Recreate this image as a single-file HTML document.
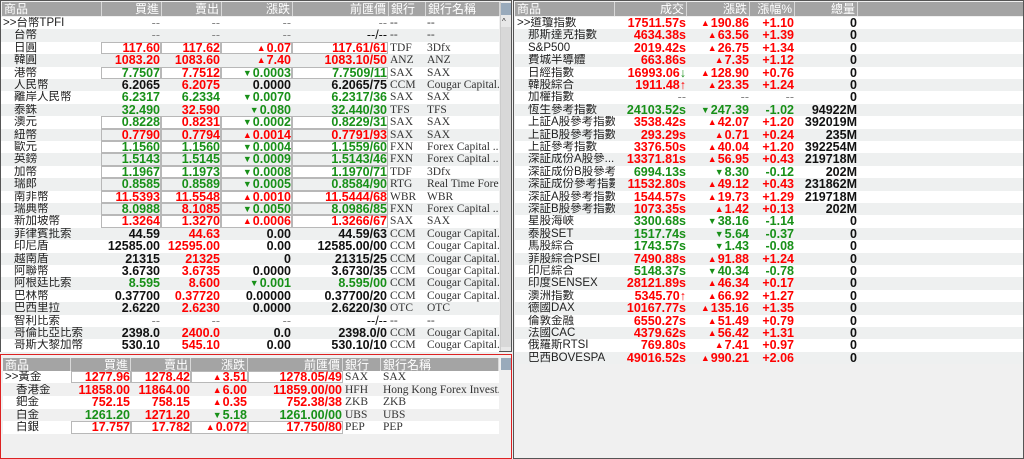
<!DOCTYPE html>
<html><head><meta charset="utf-8"><style>
*{margin:0;padding:0;box-sizing:border-box}
body{width:1024px;height:459px;overflow:hidden;background:#f0f0f0;position:relative;font-family:"Liberation Sans","Noto Sans CJK TC",sans-serif}
.pan{position:absolute;border:1px solid #555;background:#f0f0f0;overflow:hidden}
.hd{position:absolute;left:1px;top:1px;height:14px;display:flex;background:#a4a4a4;color:#fff;font-size:12px;line-height:14px}
.hd span{border-right:1px solid #d8d8d8;padding:0 2px;text-align:right;white-space:nowrap;overflow:hidden}
.hd span.l{text-align:left}
.row{position:absolute;left:1px;height:12.4px;display:flex;line-height:12.4px;font-size:12.5px;font-weight:bold;white-space:nowrap}
.row:nth-child(odd){background:#fff}
.row.gr{background:#eef0f0}
.row span{text-align:right;overflow:hidden;padding-right:1px;height:12.4px;line-height:12.4px}
.row span.n{text-align:left;font-weight:normal;color:#222;font-size:11.5px;padding-left:2px}
.row span.t{text-align:left;font-weight:normal;color:#333;font-family:"Liberation Serif",serif;font-size:11.5px;padding-left:2px}
.b{box-shadow:inset 0 0 0 1px #b8b8b8}
.r{color:#f00}.g{color:#189018}.k{color:#111}.m{color:#888;font-weight:normal}
.tr{font-size:9px;vertical-align:1px;margin-right:1px}
.sb{position:absolute;background:#e8e8e8;border-left:1px solid #ccc}
i.in{display:inline-block;width:11px}
</style></head><body>

<div class="pan" style="left:0;top:0;width:512px;height:352px">
<div class="hd" style="width:498px"><span class="l" style="width:100px">商品</span><span style="width:60px">買進</span><span style="width:60px">賣出</span><span style="width:71px">漲跌</span><span style="width:96px">前匯價</span><span class="l" style="width:37px">銀行</span><span class="l" style="width:74px">銀行名稱</span></div>
<div class="sb" style="left:499px;top:1px;width:11px;height:350px"></div>
<div style="position:absolute;left:500px;top:2px;width:10px;height:12px;background:#9ab;"></div>
<div style="position:absolute;left:501px;top:18px;width:8px;height:6px;font-size:8px;line-height:6px;color:#333">^</div>
<div style="position:absolute;left:500px;top:26px;width:10px;height:320px;background:#d8d8d8"></div>
</div>

<div class="pan" style="left:0;top:354px;width:512px;height:105px;border:1px solid #d22">
<div class="hd" style="left:2px;top:3px;width:496px"><span class="l" style="width:68px">商品</span><span style="width:60px">買進</span><span style="width:60px">賣出</span><span style="width:57px">漲跌</span><span style="width:95px">前匯價</span><span class="l" style="width:38px">銀行</span><span class="l" style="width:118px">銀行名稱</span></div>
<div style="position:absolute;left:500px;top:3px;width:10px;height:12px;background:#9ab"></div>
</div>

<div class="pan" style="left:513px;top:0;width:511px;height:459px">
<div class="hd" style="width:509px"><span class="l" style="width:100px">商品</span><span style="width:72px">成交</span><span style="width:63px">漲跌</span><span style="width:45px">漲幅%</span><span style="width:63px">總量</span><span style="width:166px;border-right:none"></span></div>
</div>

<div id="rows">
<div style="position:absolute;left:0;top:0">
<div class="row" style="top:17px;width:498px"><span class="n" style="width:100px">&gt;&gt;台幣TPFI</span><span class="m" style="width:60px">--</span><span class="m" style="width:60px">--</span><span class="m" style="width:71px">--</span><span class="m" style="width:96px">--</span><span class="t" style="width:37px">--</span><span class="t" style="width:74px">--</span></div>
<div class="row gr" style="top:29.4px;width:498px"><span class="n" style="width:100px"><i class="in"></i>台幣</span><span class="m" style="width:60px">--</span><span class="m" style="width:60px">--</span><span class="m" style="width:71px">--</span><span class="k" style="width:96px;font-weight:normal">--/--</span><span class="t" style="width:37px">--</span><span class="t" style="width:74px">--</span></div>
<div class="row" style="top:41.8px;width:498px"><span class="n" style="width:100px"><i class="in"></i>日圓</span><span class="r b" style="width:60px">117.60</span><span class="r b" style="width:60px">117.62</span><span class="r b" style="width:71px"><i class="tr">▲</i>0.07</span><span class="r b" style="width:96px">117.61/61</span><span class="t" style="width:37px">TDF</span><span class="t" style="width:74px">3Dfx</span></div>
<div class="row gr" style="top:54.2px;width:498px"><span class="n" style="width:100px"><i class="in"></i>韓圓</span><span class="r" style="width:60px">1083.20</span><span class="r" style="width:60px">1083.60</span><span class="r" style="width:71px"><i class="tr">▲</i>7.40</span><span class="r" style="width:96px">1083.10/50</span><span class="t" style="width:37px">ANZ</span><span class="t" style="width:74px">ANZ</span></div>
<div class="row" style="top:66.6px;width:498px"><span class="n" style="width:100px"><i class="in"></i>港幣</span><span class="g b" style="width:60px">7.7507</span><span class="r b" style="width:60px">7.7512</span><span class="g b" style="width:71px"><i class="tr">▼</i>0.0003</span><span class="g b" style="width:96px">7.7509/11</span><span class="t" style="width:37px">SAX</span><span class="t" style="width:74px">SAX</span></div>
<div class="row gr" style="top:79px;width:498px"><span class="n" style="width:100px"><i class="in"></i>人民幣</span><span class="k" style="width:60px">6.2065</span><span class="r" style="width:60px">6.2075</span><span class="k" style="width:71px">0.0000</span><span class="k" style="width:96px">6.2065/75</span><span class="t" style="width:37px">CCM</span><span class="t" style="width:74px">Cougar Capital...</span></div>
<div class="row" style="top:91.4px;width:498px"><span class="n" style="width:100px"><i class="in"></i>離岸人民幣</span><span class="g" style="width:60px">6.2317</span><span class="g" style="width:60px">6.2334</span><span class="g" style="width:71px"><i class="tr">▼</i>0.0070</span><span class="g" style="width:96px">6.2317/36</span><span class="t" style="width:37px">SAX</span><span class="t" style="width:74px">SAX</span></div>
<div class="row gr" style="top:103.8px;width:498px"><span class="n" style="width:100px"><i class="in"></i>泰銖</span><span class="g" style="width:60px">32.490</span><span class="r" style="width:60px">32.590</span><span class="g" style="width:71px"><i class="tr">▼</i>0.080</span><span class="g" style="width:96px">32.440/30</span><span class="t" style="width:37px">TFS</span><span class="t" style="width:74px">TFS</span></div>
<div class="row" style="top:116.2px;width:498px"><span class="n" style="width:100px"><i class="in"></i>澳元</span><span class="g b" style="width:60px">0.8228</span><span class="r b" style="width:60px">0.8231</span><span class="g b" style="width:71px"><i class="tr">▼</i>0.0002</span><span class="g b" style="width:96px">0.8229/31</span><span class="t" style="width:37px">SAX</span><span class="t" style="width:74px">SAX</span></div>
<div class="row gr" style="top:128.6px;width:498px"><span class="n" style="width:100px"><i class="in"></i>紐幣</span><span class="r b" style="width:60px">0.7790</span><span class="r b" style="width:60px">0.7794</span><span class="r b" style="width:71px"><i class="tr">▲</i>0.0014</span><span class="r b" style="width:96px">0.7791/93</span><span class="t" style="width:37px">SAX</span><span class="t" style="width:74px">SAX</span></div>
<div class="row" style="top:141px;width:498px"><span class="n" style="width:100px"><i class="in"></i>歐元</span><span class="g b" style="width:60px">1.1560</span><span class="g b" style="width:60px">1.1560</span><span class="g b" style="width:71px"><i class="tr">▼</i>0.0004</span><span class="g b" style="width:96px">1.1559/60</span><span class="t" style="width:37px">FXN</span><span class="t" style="width:74px">Forex Capital ...</span></div>
<div class="row gr" style="top:153.4px;width:498px"><span class="n" style="width:100px"><i class="in"></i>英鎊</span><span class="g b" style="width:60px">1.5143</span><span class="g b" style="width:60px">1.5145</span><span class="g b" style="width:71px"><i class="tr">▼</i>0.0009</span><span class="g b" style="width:96px">1.5143/46</span><span class="t" style="width:37px">FXN</span><span class="t" style="width:74px">Forex Capital ...</span></div>
<div class="row" style="top:165.8px;width:498px"><span class="n" style="width:100px"><i class="in"></i>加幣</span><span class="g b" style="width:60px">1.1967</span><span class="g b" style="width:60px">1.1973</span><span class="g b" style="width:71px"><i class="tr">▼</i>0.0008</span><span class="g b" style="width:96px">1.1970/71</span><span class="t" style="width:37px">TDF</span><span class="t" style="width:74px">3Dfx</span></div>
<div class="row gr" style="top:178.2px;width:498px"><span class="n" style="width:100px"><i class="in"></i>瑞郎</span><span class="g b" style="width:60px">0.8585</span><span class="g b" style="width:60px">0.8589</span><span class="g b" style="width:71px"><i class="tr">▼</i>0.0005</span><span class="g b" style="width:96px">0.8584/90</span><span class="t" style="width:37px">RTG</span><span class="t" style="width:74px">Real Time Fore...</span></div>
<div class="row" style="top:190.6px;width:498px"><span class="n" style="width:100px"><i class="in"></i>南非幣</span><span class="r b" style="width:60px">11.5393</span><span class="r b" style="width:60px">11.5548</span><span class="r b" style="width:71px"><i class="tr">▲</i>0.0010</span><span class="r b" style="width:96px">11.5444/68</span><span class="t" style="width:37px">WBR</span><span class="t" style="width:74px">WBR</span></div>
<div class="row gr" style="top:203px;width:498px"><span class="n" style="width:100px"><i class="in"></i>瑞典幣</span><span class="g b" style="width:60px">8.0988</span><span class="r b" style="width:60px">8.1085</span><span class="g b" style="width:71px"><i class="tr">▼</i>0.0050</span><span class="g b" style="width:96px">8.0986/85</span><span class="t" style="width:37px">FXN</span><span class="t" style="width:74px">Forex Capital ...</span></div>
<div class="row" style="top:215.4px;width:498px"><span class="n" style="width:100px"><i class="in"></i>新加坡幣</span><span class="r b" style="width:60px">1.3264</span><span class="r b" style="width:60px">1.3270</span><span class="r b" style="width:71px"><i class="tr">▲</i>0.0006</span><span class="r b" style="width:96px">1.3266/67</span><span class="t" style="width:37px">SAX</span><span class="t" style="width:74px">SAX</span></div>
<div class="row gr" style="top:227.8px;width:498px"><span class="n" style="width:100px"><i class="in"></i>菲律賓批索</span><span class="k" style="width:60px">44.59</span><span class="r" style="width:60px">44.63</span><span class="k" style="width:71px">0.00</span><span class="k" style="width:96px">44.59/63</span><span class="t" style="width:37px">CCM</span><span class="t" style="width:74px">Cougar Capital...</span></div>
<div class="row" style="top:240.2px;width:498px"><span class="n" style="width:100px"><i class="in"></i>印尼盾</span><span class="k" style="width:60px">12585.00</span><span class="r" style="width:60px">12595.00</span><span class="k" style="width:71px">0.00</span><span class="k" style="width:96px">12585.00/00</span><span class="t" style="width:37px">CCM</span><span class="t" style="width:74px">Cougar Capital...</span></div>
<div class="row gr" style="top:252.6px;width:498px"><span class="n" style="width:100px"><i class="in"></i>越南盾</span><span class="k" style="width:60px">21315</span><span class="r" style="width:60px">21325</span><span class="k" style="width:71px">0</span><span class="k" style="width:96px">21315/25</span><span class="t" style="width:37px">CCM</span><span class="t" style="width:74px">Cougar Capital...</span></div>
<div class="row" style="top:265px;width:498px"><span class="n" style="width:100px"><i class="in"></i>阿聯幣</span><span class="k" style="width:60px">3.6730</span><span class="r" style="width:60px">3.6735</span><span class="k" style="width:71px">0.0000</span><span class="k" style="width:96px">3.6730/35</span><span class="t" style="width:37px">CCM</span><span class="t" style="width:74px">Cougar Capital...</span></div>
<div class="row gr" style="top:277.4px;width:498px"><span class="n" style="width:100px"><i class="in"></i>阿根廷比索</span><span class="g" style="width:60px">8.595</span><span class="r" style="width:60px">8.600</span><span class="g" style="width:71px"><i class="tr">▼</i>0.001</span><span class="g" style="width:96px">8.595/00</span><span class="t" style="width:37px">CCM</span><span class="t" style="width:74px">Cougar Capital...</span></div>
<div class="row" style="top:289.8px;width:498px"><span class="n" style="width:100px"><i class="in"></i>巴林幣</span><span class="k" style="width:60px">0.37700</span><span class="r" style="width:60px">0.37720</span><span class="k" style="width:71px">0.00000</span><span class="k" style="width:96px">0.37700/20</span><span class="t" style="width:37px">CCM</span><span class="t" style="width:74px">Cougar Capital...</span></div>
<div class="row gr" style="top:302.2px;width:498px"><span class="n" style="width:100px"><i class="in"></i>巴西里拉</span><span class="k" style="width:60px">2.6220</span><span class="r" style="width:60px">2.6230</span><span class="k" style="width:71px">0.0000</span><span class="k" style="width:96px">2.6220/30</span><span class="t" style="width:37px">OTC</span><span class="t" style="width:74px">OTC</span></div>
<div class="row" style="top:314.6px;width:498px"><span class="n" style="width:100px"><i class="in"></i>智利比索</span><span class="m" style="width:60px">--</span><span class="m" style="width:60px">--</span><span class="m" style="width:71px">--</span><span class="k" style="width:96px;font-weight:normal">--/--</span><span class="t" style="width:37px">--</span><span class="t" style="width:74px">--</span></div>
<div class="row gr" style="top:327px;width:498px"><span class="n" style="width:100px"><i class="in"></i>哥倫比亞比索</span><span class="k" style="width:60px">2398.0</span><span class="r" style="width:60px">2400.0</span><span class="k" style="width:71px">0.0</span><span class="k" style="width:96px">2398.0/0</span><span class="t" style="width:37px">CCM</span><span class="t" style="width:74px">Cougar Capital...</span></div>
<div class="row" style="top:339.4px;width:498px"><span class="n" style="width:100px"><i class="in"></i>哥斯大黎加幣</span><span class="k" style="width:60px">530.10</span><span class="r" style="width:60px">545.10</span><span class="k" style="width:71px">0.00</span><span class="k" style="width:96px">530.10/10</span><span class="t" style="width:37px">CCM</span><span class="t" style="width:74px">Cougar Capital...</span></div>
</div>

<div style="position:absolute;left:2px;top:0">
<div class="row" style="top:371px;width:496px"><span class="n" style="width:68px">&gt;&gt;黃金</span><span class="r b" style="width:60px">1277.96</span><span class="r b" style="width:60px">1278.42</span><span class="r b" style="width:57px"><i class="tr">▲</i>3.51</span><span class="r b" style="width:95px">1278.05/49</span><span class="t" style="width:38px">SAX</span><span class="t" style="width:118px">SAX</span></div>
<div class="row gr" style="top:383.6px;width:496px;background:#f0f0f0"><span class="n" style="width:68px"><i class="in"></i>香港金</span><span class="r" style="width:60px">11858.00</span><span class="r" style="width:60px">11864.00</span><span class="r" style="width:57px"><i class="tr">▲</i>6.00</span><span class="r" style="width:95px">11859.00/00</span><span class="t" style="width:38px">HFH</span><span class="t" style="width:118px">Hong Kong Forex Invest...</span></div>
<div class="row" style="top:396.2px;width:496px"><span class="n" style="width:68px"><i class="in"></i>鈀金</span><span class="r" style="width:60px">752.15</span><span class="r" style="width:60px">758.15</span><span class="r" style="width:57px"><i class="tr">▲</i>0.35</span><span class="r" style="width:95px">752.38/38</span><span class="t" style="width:38px">ZKB</span><span class="t" style="width:118px">ZKB</span></div>
<div class="row gr" style="top:408.8px;width:496px;background:#f0f0f0"><span class="n" style="width:68px"><i class="in"></i>白金</span><span class="g" style="width:60px">1261.20</span><span class="r" style="width:60px">1271.20</span><span class="g" style="width:57px"><i class="tr">▼</i>5.18</span><span class="g" style="width:95px">1261.00/00</span><span class="t" style="width:38px">UBS</span><span class="t" style="width:118px">UBS</span></div>
<div class="row" style="top:421.4px;width:496px"><span class="n" style="width:68px"><i class="in"></i>白銀</span><span class="r b" style="width:60px">17.757</span><span class="r b" style="width:60px">17.782</span><span class="r b" style="width:57px"><i class="tr">▲</i>0.072</span><span class="r b" style="width:95px">17.750/80</span><span class="t" style="width:38px">PEP</span><span class="t" style="width:118px">PEP</span></div>
</div>

<div style="position:absolute;left:514px;top:0">
<div class="row" style="top:17px;width:508px"><span class="n" style="width:100px">&gt;&gt;道瓊指數</span><span class="r" style="width:72px">17511.57s</span><span class="r" style="width:63px"><i class="tr">▲</i>190.86</span><span class="r" style="width:45px">+1.10</span><span class="k" style="width:63px">0</span></div>
<div class="row gr" style="top:29.4px;width:508px"><span class="n" style="width:100px"><i class="in"></i>那斯達克指數</span><span class="r" style="width:72px">4634.38s</span><span class="r" style="width:63px"><i class="tr">▲</i>63.56</span><span class="r" style="width:45px">+1.39</span><span class="k" style="width:63px">0</span></div>
<div class="row" style="top:41.8px;width:508px"><span class="n" style="width:100px"><i class="in"></i>S&amp;P500</span><span class="r" style="width:72px">2019.42s</span><span class="r" style="width:63px"><i class="tr">▲</i>26.75</span><span class="r" style="width:45px">+1.34</span><span class="k" style="width:63px">0</span></div>
<div class="row gr" style="top:54.2px;width:508px"><span class="n" style="width:100px"><i class="in"></i>費城半導體</span><span class="r" style="width:72px">663.86s</span><span class="r" style="width:63px"><i class="tr">▲</i>7.35</span><span class="r" style="width:45px">+1.12</span><span class="k" style="width:63px">0</span></div>
<div class="row" style="top:66.6px;width:508px"><span class="n" style="width:100px"><i class="in"></i>日經指數</span><span class="r" style="width:72px">16993.06<b class="g">↓</b></span><span class="r" style="width:63px"><i class="tr">▲</i>128.90</span><span class="r" style="width:45px">+0.76</span><span class="k" style="width:63px">0</span></div>
<div class="row gr" style="top:79px;width:508px"><span class="n" style="width:100px"><i class="in"></i>韓股綜合</span><span class="r" style="width:72px">1911.48↑</span><span class="r" style="width:63px"><i class="tr">▲</i>23.35</span><span class="r" style="width:45px">+1.24</span><span class="k" style="width:63px">0</span></div>
<div class="row" style="top:91.4px;width:508px"><span class="n" style="width:100px"><i class="in"></i>加權指數</span><span class="m" style="width:72px">--</span><span class="m" style="width:63px">--</span><span class="m" style="width:45px">--</span><span class="k" style="width:63px">0</span></div>
<div class="row gr" style="top:103.8px;width:508px"><span class="n" style="width:100px"><i class="in"></i>恆生參考指數</span><span class="g" style="width:72px">24103.52s</span><span class="g" style="width:63px"><i class="tr">▼</i>247.39</span><span class="g" style="width:45px">-1.02</span><span class="k" style="width:63px">94922M</span></div>
<div class="row" style="top:116.2px;width:508px"><span class="n" style="width:100px"><i class="in"></i>上証A股參考指數</span><span class="r" style="width:72px">3538.42s</span><span class="r" style="width:63px"><i class="tr">▲</i>42.07</span><span class="r" style="width:45px">+1.20</span><span class="k" style="width:63px">392019M</span></div>
<div class="row gr" style="top:128.6px;width:508px"><span class="n" style="width:100px"><i class="in"></i>上証B股參考指數</span><span class="r" style="width:72px">293.29s</span><span class="r" style="width:63px"><i class="tr">▲</i>0.71</span><span class="r" style="width:45px">+0.24</span><span class="k" style="width:63px">235M</span></div>
<div class="row" style="top:141px;width:508px"><span class="n" style="width:100px"><i class="in"></i>上証參考指數</span><span class="r" style="width:72px">3376.50s</span><span class="r" style="width:63px"><i class="tr">▲</i>40.04</span><span class="r" style="width:45px">+1.20</span><span class="k" style="width:63px">392254M</span></div>
<div class="row gr" style="top:153.4px;width:508px"><span class="n" style="width:100px"><i class="in"></i>深証成份A股參...</span><span class="r" style="width:72px">13371.81s</span><span class="r" style="width:63px"><i class="tr">▲</i>56.95</span><span class="r" style="width:45px">+0.43</span><span class="k" style="width:63px">219718M</span></div>
<div class="row" style="top:165.8px;width:508px"><span class="n" style="width:100px"><i class="in"></i>深証成份B股參考...</span><span class="g" style="width:72px">6994.13s</span><span class="g" style="width:63px"><i class="tr">▼</i>8.30</span><span class="g" style="width:45px">-0.12</span><span class="k" style="width:63px">202M</span></div>
<div class="row gr" style="top:178.2px;width:508px"><span class="n" style="width:100px"><i class="in"></i>深証成份參考指數</span><span class="r" style="width:72px">11532.80s</span><span class="r" style="width:63px"><i class="tr">▲</i>49.12</span><span class="r" style="width:45px">+0.43</span><span class="k" style="width:63px">231862M</span></div>
<div class="row" style="top:190.6px;width:508px"><span class="n" style="width:100px"><i class="in"></i>深証A股參考指數</span><span class="r" style="width:72px">1544.57s</span><span class="r" style="width:63px"><i class="tr">▲</i>19.73</span><span class="r" style="width:45px">+1.29</span><span class="k" style="width:63px">219718M</span></div>
<div class="row gr" style="top:203px;width:508px"><span class="n" style="width:100px"><i class="in"></i>深証B股參考指數</span><span class="r" style="width:72px">1073.35s</span><span class="r" style="width:63px"><i class="tr">▲</i>1.42</span><span class="r" style="width:45px">+0.13</span><span class="k" style="width:63px">202M</span></div>
<div class="row" style="top:215.4px;width:508px"><span class="n" style="width:100px"><i class="in"></i>星股海峽</span><span class="g" style="width:72px">3300.68s</span><span class="g" style="width:63px"><i class="tr">▼</i>38.16</span><span class="g" style="width:45px">-1.14</span><span class="k" style="width:63px">0</span></div>
<div class="row gr" style="top:227.8px;width:508px"><span class="n" style="width:100px"><i class="in"></i>泰股SET</span><span class="g" style="width:72px">1517.74s</span><span class="g" style="width:63px"><i class="tr">▼</i>5.64</span><span class="g" style="width:45px">-0.37</span><span class="k" style="width:63px">0</span></div>
<div class="row" style="top:240.2px;width:508px"><span class="n" style="width:100px"><i class="in"></i>馬股綜合</span><span class="g" style="width:72px">1743.57s</span><span class="g" style="width:63px"><i class="tr">▼</i>1.43</span><span class="g" style="width:45px">-0.08</span><span class="k" style="width:63px">0</span></div>
<div class="row gr" style="top:252.6px;width:508px"><span class="n" style="width:100px"><i class="in"></i>菲股綜合PSEI</span><span class="r" style="width:72px">7490.88s</span><span class="r" style="width:63px"><i class="tr">▲</i>91.88</span><span class="r" style="width:45px">+1.24</span><span class="k" style="width:63px">0</span></div>
<div class="row" style="top:265px;width:508px"><span class="n" style="width:100px"><i class="in"></i>印尼綜合</span><span class="g" style="width:72px">5148.37s</span><span class="g" style="width:63px"><i class="tr">▼</i>40.34</span><span class="g" style="width:45px">-0.78</span><span class="k" style="width:63px">0</span></div>
<div class="row gr" style="top:277.4px;width:508px"><span class="n" style="width:100px"><i class="in"></i>印度SENSEX</span><span class="r" style="width:72px">28121.89s</span><span class="r" style="width:63px"><i class="tr">▲</i>46.34</span><span class="r" style="width:45px">+0.17</span><span class="k" style="width:63px">0</span></div>
<div class="row" style="top:289.8px;width:508px"><span class="n" style="width:100px"><i class="in"></i>澳洲指數</span><span class="r" style="width:72px">5345.70↑</span><span class="r" style="width:63px"><i class="tr">▲</i>66.92</span><span class="r" style="width:45px">+1.27</span><span class="k" style="width:63px">0</span></div>
<div class="row gr" style="top:302.2px;width:508px"><span class="n" style="width:100px"><i class="in"></i>德國DAX</span><span class="r" style="width:72px">10167.77s</span><span class="r" style="width:63px"><i class="tr">▲</i>135.16</span><span class="r" style="width:45px">+1.35</span><span class="k" style="width:63px">0</span></div>
<div class="row" style="top:314.6px;width:508px"><span class="n" style="width:100px"><i class="in"></i>倫敦金融</span><span class="r" style="width:72px">6550.27s</span><span class="r" style="width:63px"><i class="tr">▲</i>51.49</span><span class="r" style="width:45px">+0.79</span><span class="k" style="width:63px">0</span></div>
<div class="row gr" style="top:327px;width:508px"><span class="n" style="width:100px"><i class="in"></i>法國CAC</span><span class="r" style="width:72px">4379.62s</span><span class="r" style="width:63px"><i class="tr">▲</i>56.42</span><span class="r" style="width:45px">+1.31</span><span class="k" style="width:63px">0</span></div>
<div class="row" style="top:339.4px;width:508px"><span class="n" style="width:100px"><i class="in"></i>俄羅斯RTSI</span><span class="r" style="width:72px">769.80s</span><span class="r" style="width:63px"><i class="tr">▲</i>7.41</span><span class="r" style="width:45px">+0.97</span><span class="k" style="width:63px">0</span></div>
<div class="row gr" style="top:351.8px;width:508px"><span class="n" style="width:100px"><i class="in"></i>巴西BOVESPA</span><span class="r" style="width:72px">49016.52s</span><span class="r" style="width:63px"><i class="tr">▲</i>990.21</span><span class="r" style="width:45px">+2.06</span><span class="k" style="width:63px">0</span></div>
</div>
</div>
</body></html>
